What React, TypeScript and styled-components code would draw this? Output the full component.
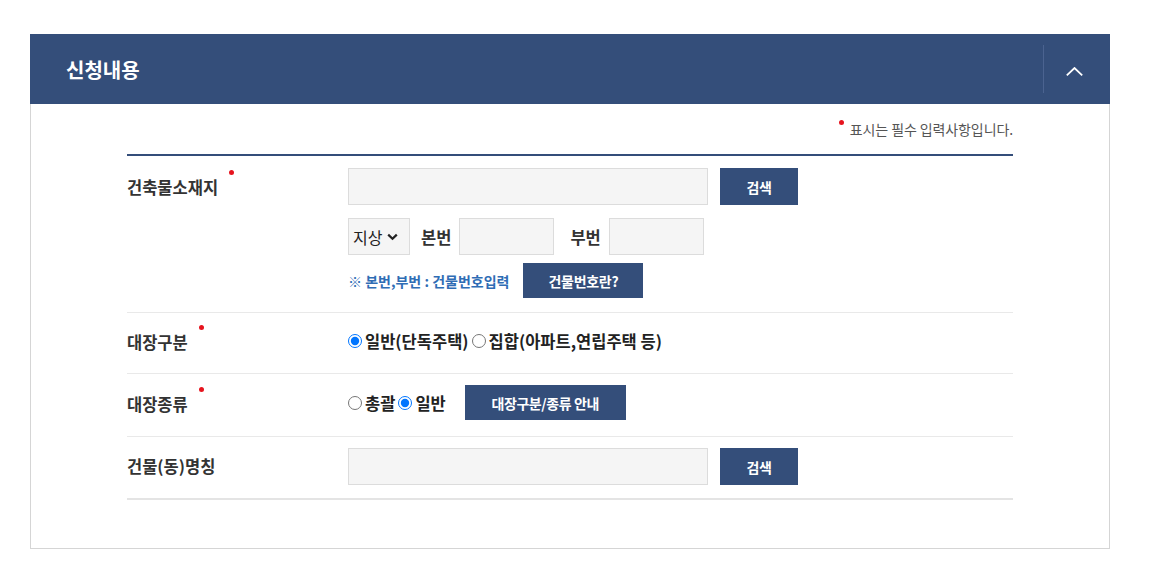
import styled, { createGlobalStyle } from "styled-components";

const GlobalStyle = createGlobalStyle`
  html, body {
    margin: 0;
    padding: 0;
    background: #fff;
  }
  body {
    font-family: "Noto Sans CJK KR", "Noto Sans", sans-serif;
    color: #333;
  }
  * {
    box-sizing: border-box;
  }
`;

const NAVY = "#344e7a";

const Page = styled.div`
  padding: 34px 40px 0 30px;
`;

const Panel = styled.section`
  width: 1080px;
`;

const PanelHeader = styled.header`
  display: flex;
  align-items: center;
  height: 70px;
  background: ${NAVY};
  padding-left: 36px;
`;

const PanelTitle = styled.h2`
  flex: 1;
  margin: 0;
  color: #fff;
  font-size: 20px;
  font-weight: 700;
  letter-spacing: 0;
`;

const ToggleButton = styled.button`
  display: flex;
  align-items: center;
  justify-content: center;
  width: 67px;
  height: 48px;
  border: 0;
  border-left: 1px solid #4b6390;
  background: transparent;
  padding: 4px 5px 0 0;
  cursor: pointer;
`;

const PanelBody = styled.div`
  border: 1px solid #d5d5d5;
  border-top: 0;
  padding: 15px 96px 48px 96px;
`;

const RequiredNote = styled.p`
  margin: 0 0 15px;
  text-align: right;
  font-size: 14px;
  line-height: 20px;
  color: #555;
  letter-spacing: -0.1px;
`;

const Dot = styled.span`
  display: inline-block;
  width: 5px;
  height: 5px;
  border-radius: 50%;
  background: #e6141e;
  vertical-align: top;
`;

const NoteDot = styled(Dot)`
  margin: 1px 6px 0 0;
`;

const Form = styled.div`
  border-top: 2px solid ${NAVY};
  border-bottom: 2px solid #e4e4e4;
`;

const Row = styled.div<{ $top?: boolean }>`
  display: grid;
  grid-template-columns: 221px 1fr;
  align-items: ${(p) => (p.$top ? "start" : "center")};
  padding: ${(p) => (p.$top ? "12px 0 14px" : "11px 0 12px")};
  & + & {
    border-top: 1px solid #e9e9e9;
  }
  &:last-child {
    padding-bottom: 13px;
  }
`;

const Label = styled.div<{ $top?: boolean }>`
  font-size: 16.5px;
  font-weight: 700;
  color: #333;
  letter-spacing: 0;
  line-height: 37px;
  padding-top: ${(p) => (p.$top ? "1px" : "0")};
`;

const LabelDot = styled(Dot)`
  margin: 1px 0 0 11px;
`;

const Field = styled.div`
  display: flex;
  flex-direction: column;
`;

const Line = styled.div<{ $gap?: number; $mt?: number }>`
  display: flex;
  align-items: center;
  gap: ${(p) => p.$gap ?? 12}px;
  margin-top: ${(p) => p.$mt ?? 0}px;
`;

const TextInput = styled.input<{ $w: number }>`
  width: ${(p) => p.$w}px;
  height: 37px;
  border: 1px solid #dcdcdc;
  background: #f5f5f5;
  padding: 0 10px;
  font: inherit;
  outline: none;
`;

const Button = styled.button<{ $w: number; $h?: number }>`
  width: ${(p) => p.$w}px;
  height: ${(p) => p.$h ?? 37}px;
  border: 0;
  background: ${NAVY};
  color: #fff;
  font-family: inherit;
  font-size: 14px;
  font-weight: 700;
  letter-spacing: -0.3px;
  cursor: pointer;
  padding: 0;
`;

const SelectBox = styled.div`
  display: flex;
  align-items: center;
  gap: 5px;
  width: 62px;
  height: 37px;
  border: 1px solid #dcdcdc;
  background: #f5f5f5;
  padding-left: 4px;
  font-size: 16px;
  color: #222;
`;

const SubLabel = styled.span<{ $ml: number }>`
  margin: 0 8px 0 ${(p) => p.$ml}px;
  font-size: 16.5px;
  font-weight: 700;
  color: #333;
`;

const Hint = styled.span`
  font-size: 14px;
  font-weight: 700;
  color: #2f6db5;
  letter-spacing: 0;
  margin-right: 2px;
`;

const RadioGroup = styled.div`
  display: flex;
  align-items: center;
  padding-bottom: 4px;
`;

const RadioLabel = styled.label`
  display: inline-flex;
  align-items: center;
  font-size: 16.5px;
  font-weight: 700;
  color: #222;
  letter-spacing: 0;
  margin-right: 3px;
  & input {
    margin: 0 3px 0 0;
    width: 14px;
    height: 14px;
  }
`;

const GuideButton = styled(Button)`
  margin-left: 16px;
  letter-spacing: -0.4px;
`;

const ChevronUp = () => (
  <svg width="17" height="9" viewBox="0 0 17 9" fill="none">
    <path d="M0.8 8.3 L8.5 1 L16.2 8.3" stroke="#fff" strokeWidth="1.8" />
  </svg>
);

const ChevronDown = () => (
  <svg width="11" height="8" viewBox="0 0 11 8" fill="none">
    <path d="M1.2 1.6 L5.5 5.8 L9.8 1.6" stroke="#222" strokeWidth="2.2" />
  </svg>
);

export default function App() {
  return (
    <Page>
      <GlobalStyle />
      <Panel>
        <PanelHeader>
          <PanelTitle>신청내용</PanelTitle>
          <ToggleButton aria-label="접기">
            <ChevronUp />
          </ToggleButton>
        </PanelHeader>
        <PanelBody>
          <RequiredNote>
            <NoteDot />
            표시는 필수 입력사항입니다.
          </RequiredNote>
          <Form>
            <Row $top>
              <Label $top>
                건축물소재지
                <LabelDot />
              </Label>
              <Field>
                <Line>
                  <TextInput $w={360} />
                  <Button $w={78}>검색</Button>
                </Line>
                <Line $mt={13} $gap={0}>
                  <SelectBox>
                    지상
                    <ChevronDown />
                  </SelectBox>
                  <SubLabel $ml={11}>본번</SubLabel>
                  <TextInput $w={95} />
                  <SubLabel $ml={16}>부번</SubLabel>
                  <TextInput $w={95} />
                </Line>
                <Line $mt={8}>
                  <Hint>※ 본번,부번 : 건물번호입력</Hint>
                  <Button $w={120} $h={35}>
                    건물번호란?
                  </Button>
                </Line>
              </Field>
            </Row>
            <Row>
              <Label>
                대장구분
                <LabelDot />
              </Label>
              <RadioGroup>
                <RadioLabel>
                  <input type="radio" name="kind" defaultChecked />
                  일반(단독주택)
                </RadioLabel>
                <RadioLabel>
                  <input type="radio" name="kind" />
                  집합(아파트,연립주택 등)
                </RadioLabel>
              </RadioGroup>
            </Row>
            <Row>
              <Label>
                대장종류
                <LabelDot />
              </Label>
              <RadioGroup>
                <RadioLabel>
                  <input type="radio" name="type" />
                  총괄
                </RadioLabel>
                <RadioLabel>
                  <input type="radio" name="type" defaultChecked />
                  일반
                </RadioLabel>
                <GuideButton $w={161} $h={35}>
                  대장구분/종류 안내
                </GuideButton>
              </RadioGroup>
            </Row>
            <Row>
              <Label>건물(동)명칭</Label>
              <Line>
                <TextInput $w={360} />
                <Button $w={78}>검색</Button>
              </Line>
            </Row>
          </Form>
        </PanelBody>
      </Panel>
    </Page>
  );
}
